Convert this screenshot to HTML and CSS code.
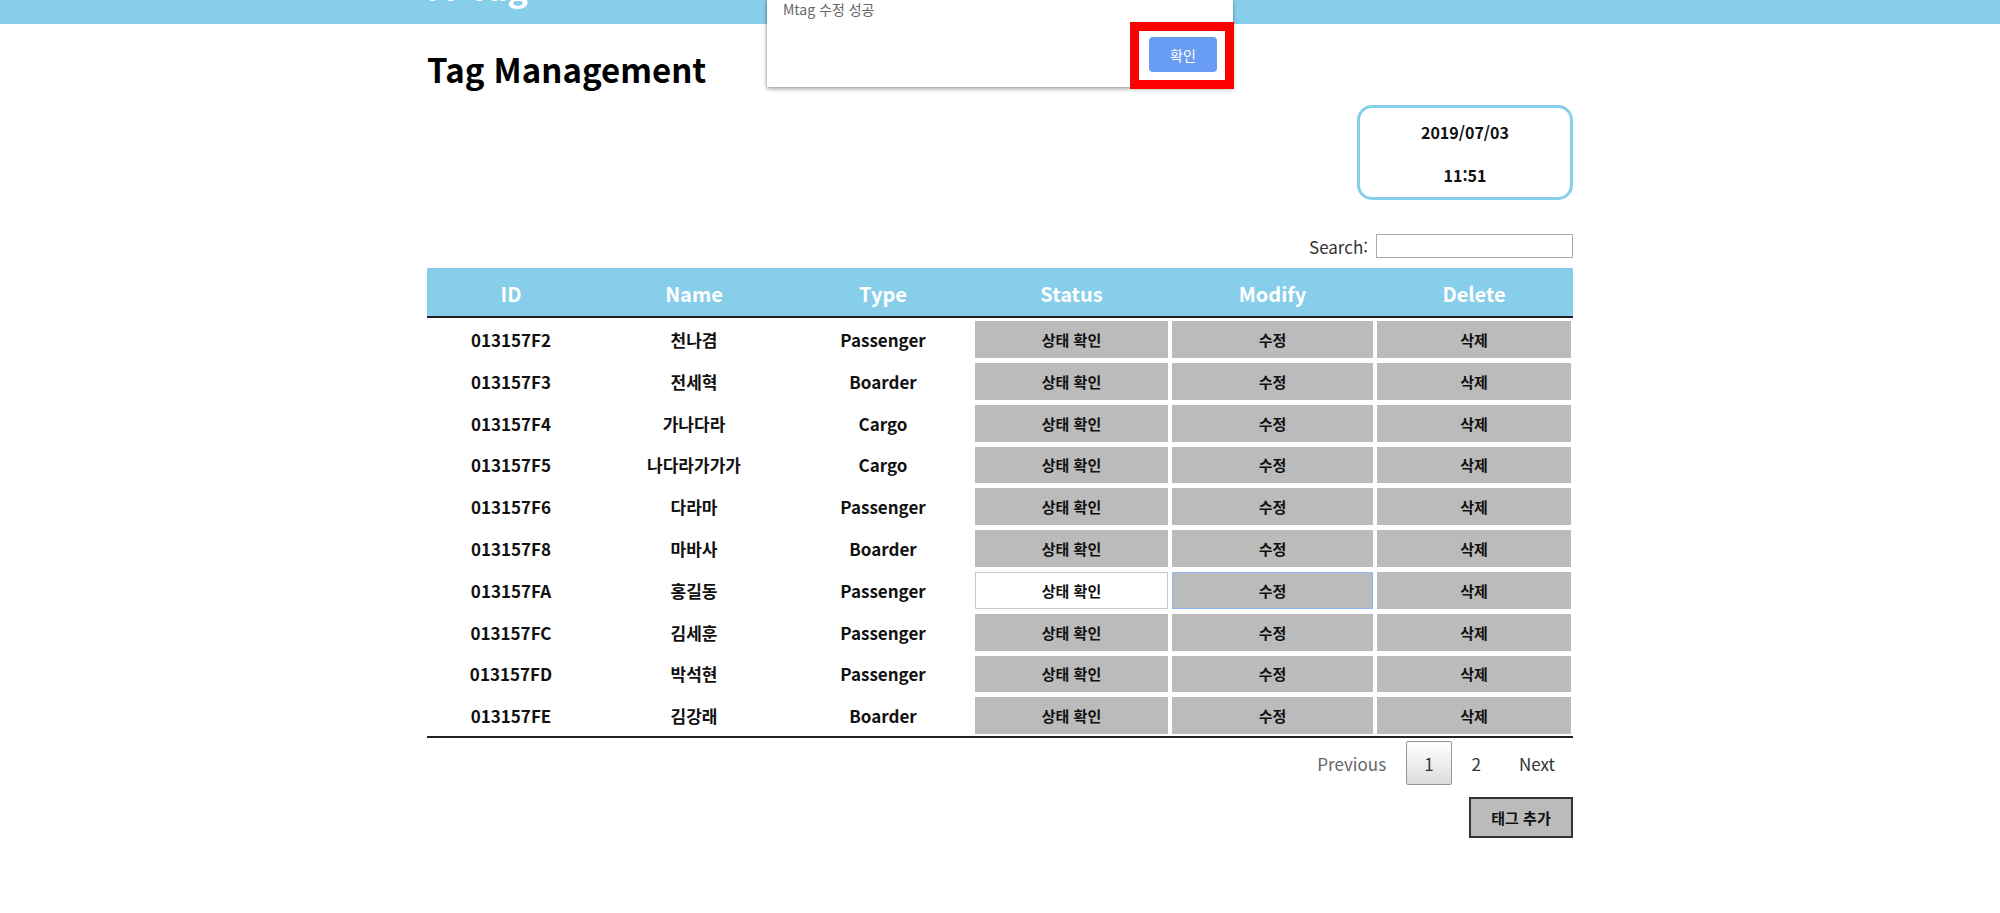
FILE: index.html
```html
<!DOCTYPE html>
<html lang="ko">
<head>
<meta charset="utf-8">
<title>Tag Management</title>
<link rel="stylesheet" href="styles.css">
</head>
<body>
<header class="topbar">
  <div class="topbar-inner"><span class="brand">M-Tag</span></div>
</header>

<main class="container">
  <h1 class="title">Tag Management</h1>

  <div class="clock-row">
    <div class="clock">
      <p>2019/07/03</p>
      <p>11:51</p>
    </div>
  </div>

  <div class="search-row">
    <label class="search-label">Search:<input class="search-input" type="text"></label>
  </div>

  <table class="tag-table">
    <colgroup>
      <col class="c-id"><col class="c-name"><col class="c-type"><col class="c-status"><col class="c-modify"><col class="c-delete">
    </colgroup>
    <thead>
      <tr><th>ID</th><th>Name</th><th>Type</th><th>Status</th><th>Modify</th><th>Delete</th></tr>
    </thead>
    <tbody>
      <tr><td>013157F2</td><td>천나겸</td><td>Passenger</td><td><button class="cell-btn">상태 확인</button></td><td><button class="cell-btn">수정</button></td><td><button class="cell-btn">삭제</button></td></tr>
      <tr><td>013157F3</td><td>전세혁</td><td>Boarder</td><td><button class="cell-btn">상태 확인</button></td><td><button class="cell-btn">수정</button></td><td><button class="cell-btn">삭제</button></td></tr>
      <tr><td>013157F4</td><td>가나다라</td><td>Cargo</td><td><button class="cell-btn">상태 확인</button></td><td><button class="cell-btn">수정</button></td><td><button class="cell-btn">삭제</button></td></tr>
      <tr><td>013157F5</td><td>나다라가가가</td><td>Cargo</td><td><button class="cell-btn">상태 확인</button></td><td><button class="cell-btn">수정</button></td><td><button class="cell-btn">삭제</button></td></tr>
      <tr><td>013157F6</td><td>다라마</td><td>Passenger</td><td><button class="cell-btn">상태 확인</button></td><td><button class="cell-btn">수정</button></td><td><button class="cell-btn">삭제</button></td></tr>
      <tr><td>013157F8</td><td>마바사</td><td>Boarder</td><td><button class="cell-btn">상태 확인</button></td><td><button class="cell-btn">수정</button></td><td><button class="cell-btn">삭제</button></td></tr>
      <tr><td>013157FA</td><td>홍길동</td><td>Passenger</td><td><button class="cell-btn cell-btn--white">상태 확인</button></td><td><button class="cell-btn cell-btn--focus">수정</button></td><td><button class="cell-btn">삭제</button></td></tr>
      <tr><td>013157FC</td><td>김세훈</td><td>Passenger</td><td><button class="cell-btn">상태 확인</button></td><td><button class="cell-btn">수정</button></td><td><button class="cell-btn">삭제</button></td></tr>
      <tr><td>013157FD</td><td>박석현</td><td>Passenger</td><td><button class="cell-btn">상태 확인</button></td><td><button class="cell-btn">수정</button></td><td><button class="cell-btn">삭제</button></td></tr>
      <tr><td>013157FE</td><td>김강래</td><td>Boarder</td><td><button class="cell-btn">상태 확인</button></td><td><button class="cell-btn">수정</button></td><td><button class="cell-btn">삭제</button></td></tr>
    </tbody>
  </table>

  <div class="pager">
    <span class="page-btn page-btn--disabled">Previous</span>
    <span class="page-btn page-btn--current">1</span>
    <span class="page-btn">2</span>
    <span class="page-btn">Next</span>
  </div>

  <div class="actions">
    <button class="add-btn">태그 추가</button>
  </div>
</main>

<div class="dialog">
  <p class="dialog-msg">Mtag 수정 성공</p>
  <div class="dialog-actions"><button class="dialog-ok">확인</button></div>
</div>
<div class="annot"></div>
</body>
</html>
```

FILE: styles.css
```css
html, body {
  margin: 0;
  padding: 0;
  background: #fff;
}

body {
  font-family: "Noto Sans CJK KR", "Noto Sans", sans-serif;
  color: #111;
  position: relative;
  min-height: 913px;
}

.topbar {
  height: 24px;
  background: #87ceeb;
  overflow: hidden;
  display: flex;
  align-items: flex-end;
  justify-content: center;
}

.topbar-inner {
  width: 1146px;
  padding-bottom: 13px;
  line-height: 34px;
}

.brand {
  font-size: 34px;
  font-weight: 700;
  color: #fff;
}

.container {
  width: 1146px;
  margin: 0 auto;
}

.title {
  margin: 20.7px 0 0;
  font-size: 33px;
  font-weight: 700;
  color: #000;
  line-height: normal;
}

.clock-row {
  display: flex;
  justify-content: flex-end;
  margin-top: 12.5px;
}

.clock {
  box-sizing: border-box;
  width: 216px;
  height: 95px;
  border: 3px solid #87ceeb;
  border-radius: 15px;
  display: flex;
  flex-direction: column;
  align-items: center;
  padding-top: 13px;
  gap: 20px;
}

.clock p {
  margin: 0;
  font-size: 16px;
  font-weight: 700;
  line-height: 23px;
  color: #111;
}

.search-row {
  display: flex;
  justify-content: flex-end;
  margin-top: 34px;
  height: 24px;
}

.search-label {
  display: flex;
  align-items: center;
  font-size: 17px;
  color: #333;
}

.search-input {
  box-sizing: border-box;
  width: 197px;
  height: 24px;
  margin: 0 0 0 8px;
  border: 1px solid #aaa;
  padding: 2px 4px;
}

.tag-table {
  margin-top: 10px;
  width: 100%;
  table-layout: fixed;
  border-collapse: separate;
  border-spacing: 0;
  border-bottom: 2px solid #222;
}

.c-id { width: 168px; }
.c-name { width: 198px; }
.c-type { width: 180px; }
.c-status { width: 197px; }
.c-modify { width: 205px; }
.c-delete { width: 198px; }

.tag-table th {
  height: 50px;
  padding: 3px 0 0;
  box-sizing: border-box;
  background: #87ceeb;
  color: #fff;
  font-size: 20px;
  font-weight: 700;
  text-align: center;
  border-bottom: 2px solid #222;
}

.tag-table td {
  padding: 3px 2px 2px;
  text-align: center;
  font-size: 17px;
  font-weight: 700;
  color: #111;
}

.cell-btn {
  display: block;
  box-sizing: border-box;
  width: 100%;
  height: 36.8px;
  margin: 0;
  border: 1px solid #bbb;
  background: #bbb;
  font-family: inherit;
  font-size: 15px;
  font-weight: 700;
  color: #111;
  padding: 0;
}

.cell-btn--white {
  background: #fff;
  border-color: #c8c8c8;
}

.cell-btn--focus {
  border-color: #8ab4f8;
}

.pager {
  display: flex;
  justify-content: flex-end;
  padding-top: 3px;
}

.page-btn {
  box-sizing: border-box;
  padding: 8.5px 17px;
  margin-left: 2px;
  border: 1px solid transparent;
  border-radius: 2px;
  font-size: 17px;
  line-height: normal;
  color: #333;
}

.page-btn--disabled {
  color: #666;
}

.page-btn--current {
  border-color: #979797;
  background: linear-gradient(to bottom, #fff 0%, #dcdcdc 100%);
}

.actions {
  display: flex;
  justify-content: flex-end;
  margin-top: 12px;
}

.add-btn {
  box-sizing: border-box;
  width: 104px;
  height: 41px;
  background: #bbb;
  border: 2px solid #333;
  font-family: inherit;
  font-size: 15px;
  font-weight: 700;
  color: #111;
  padding: 0;
}

.dialog {
  position: absolute;
  top: 0;
  left: calc(50% - 233px);
  width: 466px;
  height: 87px;
  box-sizing: border-box;
  background: #fff;
  padding: 0 16px 15px;
  display: flex;
  flex-direction: column;
  box-shadow: 0 2px 4px rgba(0, 0, 0, 0.35), -1px 0 2px rgba(0, 0, 0, 0.15);
}

.dialog-msg {
  margin: 0;
  font-size: 14px;
  line-height: 18px;
  color: #666;
}

.dialog-actions {
  margin-top: auto;
  display: flex;
  justify-content: flex-end;
}

.dialog-ok {
  width: 68px;
  height: 35px;
  border: 0;
  border-radius: 4px;
  background: #699df4;
  color: #fff;
  font-family: inherit;
  font-size: 14px;
}

.annot {
  position: absolute;
  top: 22px;
  left: calc(50% + 130px);
  width: 104px;
  height: 67px;
  box-sizing: border-box;
  border: 9px solid #ff0000;
}
```
